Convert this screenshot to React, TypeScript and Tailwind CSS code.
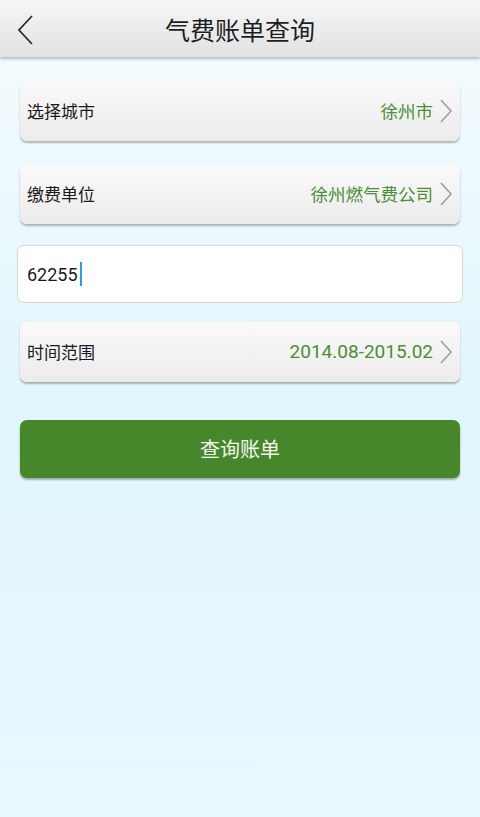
import React from "react";

const font = { fontFamily: '"Noto Sans CJK SC", "Noto Sans", sans-serif' };

function Chevron() {
  return (
    <svg width="14" height="26" viewBox="0 0 14 26" className="ml-[6px]">
      <path d="M2 2 L12 13 L2 24" fill="none" stroke="#9e9e9e" strokeWidth="1.6" />
    </svg>
  );
}

function Row({ label, value, numeric }: { label: string; value: string; numeric?: boolean }) {
  return (
    <div className="mx-[20px] h-[60px] rounded-[7px] bg-gradient-to-b from-[#fafafa] to-[#ebebeb] shadow-[0_2px_2px_rgba(0,0,0,0.28)] flex items-center pl-[7px] pr-[7px]">
      <span className="text-[17px] text-[#1a1a1a] flex-1">{label}</span>
      {numeric ? (
        <span className="text-[19px] text-[#4a8f33]" style={{ fontFamily: 'Roboto, "Noto Sans", sans-serif' }}>{value}</span>
      ) : (
        <span className="text-[17.5px] text-[#4a8f33]">{value}</span>
      )}
      <Chevron />
    </div>
  );
}

export default function App() {
  return (
    <div style={font} className="w-[480px] h-[817px] flex flex-col bg-gradient-to-b from-[#f6fcfe] via-[#e0f5fc] to-[#e9f8fe] overflow-hidden">
      <div className="h-[57px] flex items-center relative bg-gradient-to-b from-[#f6f6f6] to-[#e2e2e2] shadow-[0_2px_3px_rgba(0,0,0,0.25)]">
        <svg width="20" height="32" viewBox="0 0 20 32" className="absolute left-[16px] top-[14px]">
          <path d="M16 2 L3 16 L16 30" fill="none" stroke="#2a2a2a" strokeWidth="1.8" />
        </svg>
        <div className="flex-1 text-center text-[25px] text-[#1e1e1e] leading-none pt-[2px]">气费账单查询</div>
      </div>
      <div className="flex flex-col pt-[24px]">
        <Row label="选择城市" value="徐州市" />
        <div className="h-[23px]" />
        <Row label="缴费单位" value="徐州燃气费公司" />
        <div className="h-[21px]" />
        <div className="mx-[17px] h-[58px] rounded-[7px] bg-white border border-[#d6d6d6] flex items-center pl-[9px]">
          <span className="text-[18px] text-[#1a1a1a]" style={{ fontFamily: 'Roboto, "Noto Sans", sans-serif' }}>62255</span>
          <span className="ml-[2px] w-[2px] h-[24px] bg-[#2e9bf0]" />
        </div>
        <div className="h-[19px]" />
        <Row label="时间范围" value="2014.08-2015.02" numeric />
        <div className="h-[38px]" />
        <div className="mx-[20px] h-[58px] rounded-[7px] bg-[#47872c] shadow-[0_2px_2px_rgba(0,0,0,0.3)] flex items-center justify-center">
          <span className="text-[20px] text-[#f2f7ef]">查询账单</span>
        </div>
      </div>
    </div>
  );
}
